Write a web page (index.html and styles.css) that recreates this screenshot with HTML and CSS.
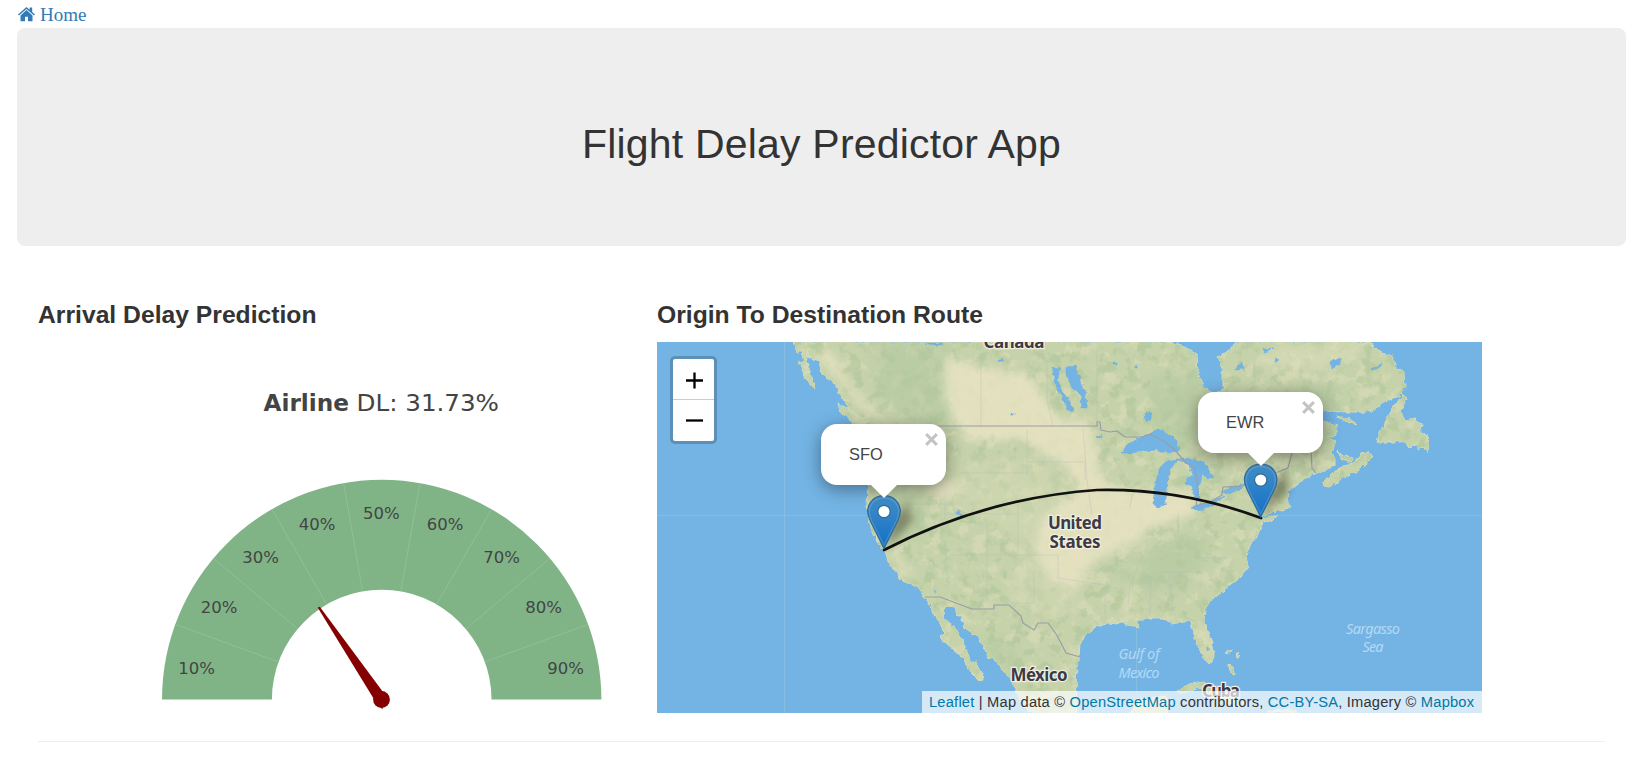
FILE: index.html
```html
<!DOCTYPE html>
<html lang="en">
<head>
<meta charset="utf-8">
<title>Flight Delay Predictor App</title>
<link rel="stylesheet" href="styles.css">
</head>
<body>
<nav class="top-nav">
  <a class="home-link" href="#"><svg class="home-icon" viewBox="0 0 17 15"><path d="M8.5 0 11.6 2.8V.4h2.6v4.7L17 7.6l-.9 1L8.500 1.900.9 8.600 0 7.600z"/><path d="M8.500 3.100 14.500 8.400V14.300H10V9.800H7V14.300H2.500V8.400z"/></svg><span>Home</span></a>
</nav>
<header class="jumbotron"><h1>Flight Delay Predictor App</h1></header>
<main class="content">
  <section class="prediction">
    <h2>Arrival Delay Prediction</h2>
    <svg class="gauge" viewBox="38 342 587 371">
      <text class="gauge-title strong" x="263.500" y="411" textLength="85.500" lengthAdjust="spacingAndGlyphs">Airline</text>
      <text class="gauge-title" x="356.500" y="411" textLength="142.500" lengthAdjust="spacingAndGlyphs">DL: 31.73%</text>
      <path class="gauge-band" d="M162 699.500A219.700 219.700 0 0 1 601.400 699.500H491.500A109.800 109.800 0 0 0 271.900 699.500z"/>
      <g class="gauge-lines">
        <path d="M175.300 624.400 278.500 661.900M213.400 558.300 297.600 628.900M271.900 509.200 326.800 604.400M343.600 483.100 362.600 591.400M419.900 483.100 400.800 591.400M491.600 509.200 436.600 604.400M550 558.300 465.800 628.900M588.200 624.400 484.900 661.900"/>
      </g>
      <g class="gauge-labels">
        <text x="196.700" y="674">10%</text><text x="219" y="613">20%</text><text x="260.700" y="563">30%</text>
        <text x="317" y="530">40%</text><text x="381.300" y="519">50%</text><text x="445" y="530">60%</text>
        <text x="501.700" y="563">70%</text><text x="543.500" y="613">80%</text><text x="565.500" y="674">90%</text>
      </g>
      <path class="needle" d="M317.700 607.600 319.800 606.700 383 692 382.500 709.500 374.500 700z"/>
      <circle class="needle" cx="381.500" cy="699.500" r="8.400"/>
    </svg>
  </section>
  <section class="route">
    <h2>Origin To Destination Route</h2>
    <div class="map">
      <svg class="map-canvas" viewBox="657 342 825 371">
        <defs>
          <filter id="rough" x="0" y="0" width="1" height="1" color-interpolation-filters="sRGB"><feTurbulence type="fractalNoise" baseFrequency=".2" numOctaves="2" seed="4" result="n"/><feDisplacementMap in="SourceGraphic" in2="n" scale="5" xChannelSelector="R" yChannelSelector="G"/></filter>
          <filter id="light" x="0" y="0" width="1" height="1" color-interpolation-filters="sRGB"><feTurbulence type="fractalNoise" baseFrequency=".07" numOctaves="4" seed="8"/><feColorMatrix values="0 0 0 0 .9  0 0 0 0 .88  0 0 0 0 .75  7 0 0 0 -3.7"/><feComposite operator="in" in2="SourceAlpha"/></filter>
          <filter id="dark" x="0" y="0" width="1" height="1" color-interpolation-filters="sRGB"><feTurbulence type="fractalNoise" baseFrequency=".08" numOctaves="4" seed="21"/><feColorMatrix values="0 0 0 0 .66  0 0 0 0 .76  0 0 0 0 .58  7 0 0 0 -3.7"/><feComposite operator="in" in2="SourceAlpha"/></filter>
          <filter id="soft" x="-.2" y="-.2" width="1.400" height="1.400" color-interpolation-filters="sRGB"><feGaussianBlur stdDeviation="4"/></filter>
          <filter id="shade" x="-1" y="-1" width="3" height="3"><feGaussianBlur stdDeviation="4"/></filter>
          <linearGradient id="pin" x1="0" y1="0" x2="0" y2="1"><stop offset="0" stop-color="#438fc8"/><stop offset="1" stop-color="#126fc6"/></linearGradient>
          <path id="land" d="M811 342 807 357 819 362 822 374 835 384 842 398 852 412 870 425 872 470 868 485 867 505 869 520 872 530 880 545 887 556 888 562 897 573 898 579 905 581 918 587 923 594 930 605 936 617 941 625 944 634 940 637 947 645 958 653 964 660 970 672 980 682 984 677 978 666 970 659 966 650 962 640 957 632 955 628 945 620 943 611 946 606 955 607 957 614 964 622 965 628 975 635 983 645 988 657 996 661 1004 671 1012 680 1016 690 1020 700 1030 713H1078L1076 690 1077 665 1079 660 1080 642 1088 633 1098 625 1110 624 1122 622 1128 626 1140 628 1135 620 1152 618 1162 618 1172 624 1180 622 1188 620 1193 628 1195 640 1200 650 1206 662 1212 663 1214 655 1213 645 1209 635 1204 622 1205 608 1212 600 1224 590 1232 583 1240 577 1248 567 1246 557 1247 552 1254 540 1261 530 1262 517 1275 511 1290 508 1287 500 1288 492 1296 485 1305 478 1320 472 1335 466 1335 460 1332 452 1337 441 1326 437 1337 435 1337 426 1323 422 1310 426 1322 411 1350 412 1370 412 1385 402 1400 395 1405 387 1404 373 1395 366 1392 356 1380 352 1370 342H1235L1230 350 1218 357 1223 370 1223 390 1214 394 1204 387 1198 373 1197 355 1184 346 1170 342zM793 342 797 352 802 352 805 361 808 352 812 342zM799 361 809 364 809 373 816 388 811 386 803 374zM837 403 849 409 865 421 872 434 860 432 850 420 839 411zM1323 482 1330 476 1340 467 1355 462 1362 453 1369 451 1372 458 1365 465 1355 472 1340 480 1330 487 1324 486zM1338 451 1343 456 1354 458 1351 462 1340 458zM1336 416 1350 419 1358 425 1345 422zM1403 395 1407 398 1400 412 1405 420 1415 418 1422 424 1420 430 1426 435 1429 441 1427 453 1423 446 1418 450 1417 443 1410 448 1405 440 1395 442 1377 442 1380 432 1387 420 1392 408zM1263 519 1277 515 1272 520 1263 522zM1177 692 1188 684 1205 682 1222 690 1245 704 1238 707 1220 700 1200 688 1182 693zM1131 713 1137 700 1165 696 1170 702 1166 713zM1268 711 1290 709 1298 713zM1225 652 1232 650 1230 653zM1236 653 1239 653 1237 658zM1229 664 1232 667 1235 675 1230 672z"/>
          <clipPath id="land-clip"><use href="#land"/></clipPath>
        </defs>
        <rect x="657" y="342" width="825" height="371" fill="#73b4e5"/>
        <g filter="url(#rough)">
          <use href="#land" fill="#c5d2aa" stroke="#d4dbb5" stroke-width="1"/>
          <g clip-path="url(#land-clip)">
            <use href="#land" filter="url(#light)" opacity=".4"/>
            <use href="#land" filter="url(#dark)" opacity=".45"/>
            <g filter="url(#soft)" opacity=".8">
              <path fill="#b2c99f" opacity=".7" d="M870 342H950V420L925 424 880 400zM1150 380 1196 370 1235 420 1195 450 1150 425zM1180 535 1210 535 1200 570 1160 600 1110 570zM875 480 920 490 925 530 890 545zM1250 395 1340 385V440L1280 450zM980 640 1010 640 1025 685 1000 670z"/>
              <path fill="#d4d9b4" d="M960 460H1045L1080 520V620H1040L1005 600 1020 540 960 505z" opacity=".6"/>
              <path fill="#eae4c4" d="M945 355 975 365 1030 375 1060 420 1090 420 1100 475 1140 500 1148 535 1120 550 1095 560 1075 590 1050 580 1035 550 1040 520 1080 490 1065 465 1020 440 965 440 945 400zM888 545 915 580 900 577zM1125 490H1195V515L1145 530zM1153 540 1136 570 1130 612 1120 612zM943 475 965 485 950 500 925 492zM815 355 835 375 865 410 890 425 850 385 830 350z"/>
              <path fill="#e0dfbd" d="M1195 625H1210L1220 665H1205zM1280 345 1370 342 1340 370 1250 370z" opacity=".6"/>
            </g>
          </g>
          <g fill="#73b4e5" stroke="#68abe0" stroke-width=".5">
            <path d="M1066 367 1075 366 1080 378 1086 395 1087 408 1082 408 1081 395 1072 388 1066 375zM1052 367 1060 368 1058 380 1062 392 1068 398 1074 410 1069 411 1062 398 1056 385z"/>
            <path d="M1120 453 1130 443 1148 434 1158 429 1168 434 1176 440 1180 452 1170 453 1156 450 1145 451 1132 453z"/>
            <path d="M1160 466 1166 462 1177 460 1170 470 1168 482 1165 505 1157 508 1153 503 1155 485z"/>
            <path d="M1176 459 1195 459 1203 462 1214 478 1208 478 1203 474 1198 490 1200 500 1194 496 1192 486 1184 482 1192 475 1188 464z"/>
            <path d="M1190 507 1205 503 1224 496 1215 504 1198 511zM1222 492 1230 487 1244 484 1240 490 1226 494zM1145 412 1151 411 1151 420 1146 420zM958 510 963 516 961 518 957 513zM1237 366 1243 362 1244 369 1235 370zM1330 362 1340 357 1341 364 1331 370zM1263 349 1274 348 1264 352zM1276 357 1279 360 1275 362zM1371 370 1382 363 1380 368zM1097 437 1102 435 1099 439zM934 590 936 592 934 593zM1207 647 1210 649 1207 650zM1113 362h4v2h-4zM1135 366h3v2h-3zM925 343h18v2h-10zM1011 413h3v2h-3zM998 360h5v2h-4z"/>
          </g>
        </g>
        <path class="state-lines" d="M981 360V426M1047 360V400L1053 426M1027 430V476M1027 462H1085V480M1083 428 1087 480 1092 515M960 473H1027M900 504H945V520M945 514H1018M987 520V600M1018 504V554M949 555H1058V578L1105 585V620M1034 570V603H1010M1097 422V350M1115 460 1133 490 1130 508M1178 510V540M1137 545 1142 557 1130 585 1128 605M1150 576V614M1170 575 1173 612M1160 572H1200M1195 558H1230"/>
        <path class="country-lines" d="M870 426H1097V422H1100L1101 430 1110 432 1117 431 1125 437 1143 437 1150 434 1165 442 1175 450 1185 462 1195 468 1198 490 1196 506 1210 502 1222 495 1223 487 1243 486 1255 476 1278 472 1288 468 1292 453M1311 450 1312 468 1316 473M925 597H940L972 609H994V605H1009L1021 616 1023 623 1034 630 1038 623H1048L1056 634 1062 645 1066 653 1080 657"/>
        <path class="tile-lines" d="M784.500 342V713M1136.500 628V700M657 515.500H868M1265 515.500H1482"/>
        <g class="place-labels"><text x="1014" y="348" textLength="61">Canada</text><text x="1075" y="529" textLength="54">United</text><text x="1075" y="547.500" textLength="51">States</text><text x="1039" y="681" textLength="57">México</text><text x="1221" y="697" textLength="38">Cuba</text></g>
        <g class="water-labels"><text x="1139" y="659" textLength="41">Gulf of</text><text x="1139" y="678" textLength="41">Mexico</text><text x="1373" y="634" textLength="54">Sargasso</text><text x="1373" y="652" textLength="21">Sea</text></g>
        <g filter="url(#shade)" fill="#2b2718" opacity=".42"><path d="M885 549 893 520 909 500 912 522zM1262 517 1270 488 1286 468 1289 490z"/></g>
        <path class="arc" d="M884 550Q985 498 1097 490Q1180 488 1261 518"/>
        <g id="marker" transform="translate(884 549)"><path d="M0-.5-13.200-27C-18-36-16.500-42-14-46-8-56 8-56 14-46 16.500-42 18-36 13.200-27z" fill="url(#pin)" stroke="#2e6c97" stroke-width="1.200"/><path d="M0-4-12.300-28C-16-36-15-41-12.500-45-7-53 7-53 12.500-45 15-41 16-36 12.300-28z" fill="none" stroke="#fff" stroke-opacity=".15" stroke-width="1.300"/><circle cy="-37.500" r="6.200" fill="#fff" stroke="#2e6c97" stroke-width="1.300"/></g>
        <use href="#marker" x="376.700" y="-31.500"/>
      </svg>
      <div class="zoom-control">
        <a><svg viewBox="0 0 17 17"><path d="M0 8.500H17M8.500 .5V16.500"/></svg></a>
        <a><svg viewBox="0 0 17 17"><path d="M0 8.500H17"/></svg></a>
      </div>
      <div class="popup popup-sfo"><span class="popup-text">SFO</span><svg class="popup-close" viewBox="0 0 14 14"><path d="M2 2 12 12M12 2 2 12"/></svg></div>
      <div class="popup popup-ewr"><span class="popup-text">EWR</span><svg class="popup-close" viewBox="0 0 14 14"><path d="M2 2 12 12M12 2 2 12"/></svg></div>
      <div class="attribution"><a>Leaflet</a> | Map data © <a>OpenStreetMap</a> contributors, <a>CC-BY-SA</a>, Imagery © <a>Mapbox</a></div>
    </div>
  </section>
</main>
</body>
</html>
```
FILE: styles.css
```css
* { box-sizing: border-box; }
body { margin: 0; padding: 0 17px; background: #fff; color: #333; font-family: "Liberation Sans", Arial, sans-serif; overflow: hidden; }
.top-nav { height: 28px; padding-left: 1px; font: 19px/30px "Liberation Serif", "Times New Roman", serif; }
.home-link { display: flex; align-items: flex-start; gap: 5px; color: #337ab7; text-decoration: none; }
.home-icon { width: 17px; height: 15px; margin-top: 7px; fill: currentColor; }
.jumbotron { height: 218px; border-radius: 8px; background: #eee; padding-top: 94px; text-align: center; }
h1 { margin: 0; font-size: 41px; line-height: 45px; font-weight: 400; letter-spacing: .2px; }
.content { display: grid; grid-template-columns: 587px 825px; column-gap: 32px; margin: 0 21px; height: 496px; border-bottom: 1px solid #eee; }
.prediction, .route { padding-top: 54px; }
h2 { margin: 0; height: 42px; font-size: 24.7px; line-height: 29px; font-weight: 700; }
.gauge { display: block; width: 587px; height: 371px; }
.gauge text { font-family: "DejaVu Sans", Verdana, sans-serif; fill: #444; }
.gauge-title { font-size: 23px; }
.gauge-title.strong { font-weight: 700; }
.gauge-band { fill: #80b487; }
.gauge-lines { fill: none; stroke: #93c399; stroke-width: .8; }
.gauge-labels { font-size: 16.5px; text-anchor: middle; }
.needle { fill: #850000; }
.map { position: relative; width: 825px; height: 371px; overflow: hidden; }
.map-canvas { display: block; width: 825px; height: 371px; }
.state-lines { fill: none; stroke: #b5b8bc; stroke-width: .7; opacity: .5; }
.country-lines { fill: none; stroke: #9a9ea6; stroke-width: 1.2; }
.tile-lines { fill: none; stroke: #8fc0e0; stroke-width: 1; opacity: .7; }
.place-labels text { font: 700 17px "Noto Sans", "Open Sans", sans-serif; text-anchor: middle; fill: #3b3b45; stroke: #f2eee0; stroke-width: 2.5px; paint-order: stroke; }
.water-labels text { font: italic 14.5px "Noto Sans", "Open Sans", sans-serif; text-anchor: middle; fill: #b4d9f4; }
.arc { fill: none; stroke: #111; stroke-width: 2.7; stroke-linejoin: round; stroke-linecap: round; }
.zoom-control { position: absolute; left: 13px; top: 14px; width: 47px; height: 88px; border: 3px solid rgba(0,0,0,.2); border-radius: 5px; background: #fff; background-clip: padding-box; }
.zoom-control a { display: flex; align-items: center; justify-content: center; height: 41px; padding-left: 2px; }
.zoom-control a:first-child { border-bottom: 1px solid #ccc; padding-top: 2px; }
.zoom-control svg { width: 17px; height: 17px; fill: none; stroke: #000; stroke-width: 2.3; }
.popup { position: absolute; width: 125px; height: 61px; padding: 20px 28px; border-radius: 16px; background: #fff; color: #444; font-size: 16.4px; line-height: 20px; box-shadow: 0 4px 18px rgba(0,0,0,.4); }
.popup::after { content: ""; position: absolute; left: 49px; top: 60px; width: 28px; height: 14px; background: #fff; clip-path: polygon(0 0, 100% 0, 50% 100%); }
.popup-sfo { left: 164px; top: 82px; }
.popup-ewr { left: 541px; top: 50px; }
.popup-close { position: absolute; right: 7px; top: 8px; width: 15px; height: 15px; fill: none; stroke: #c3c3c3; stroke-width: 2.7; }
.attribution { position: absolute; right: 0; bottom: 0; width: 560px; height: 22px; padding: 0 7px; background: rgba(255,255,255,.7); white-space: nowrap; font-size: 14.67px; line-height: 22px; letter-spacing: .215px; }
.attribution a { color: #0078a8; }
```
